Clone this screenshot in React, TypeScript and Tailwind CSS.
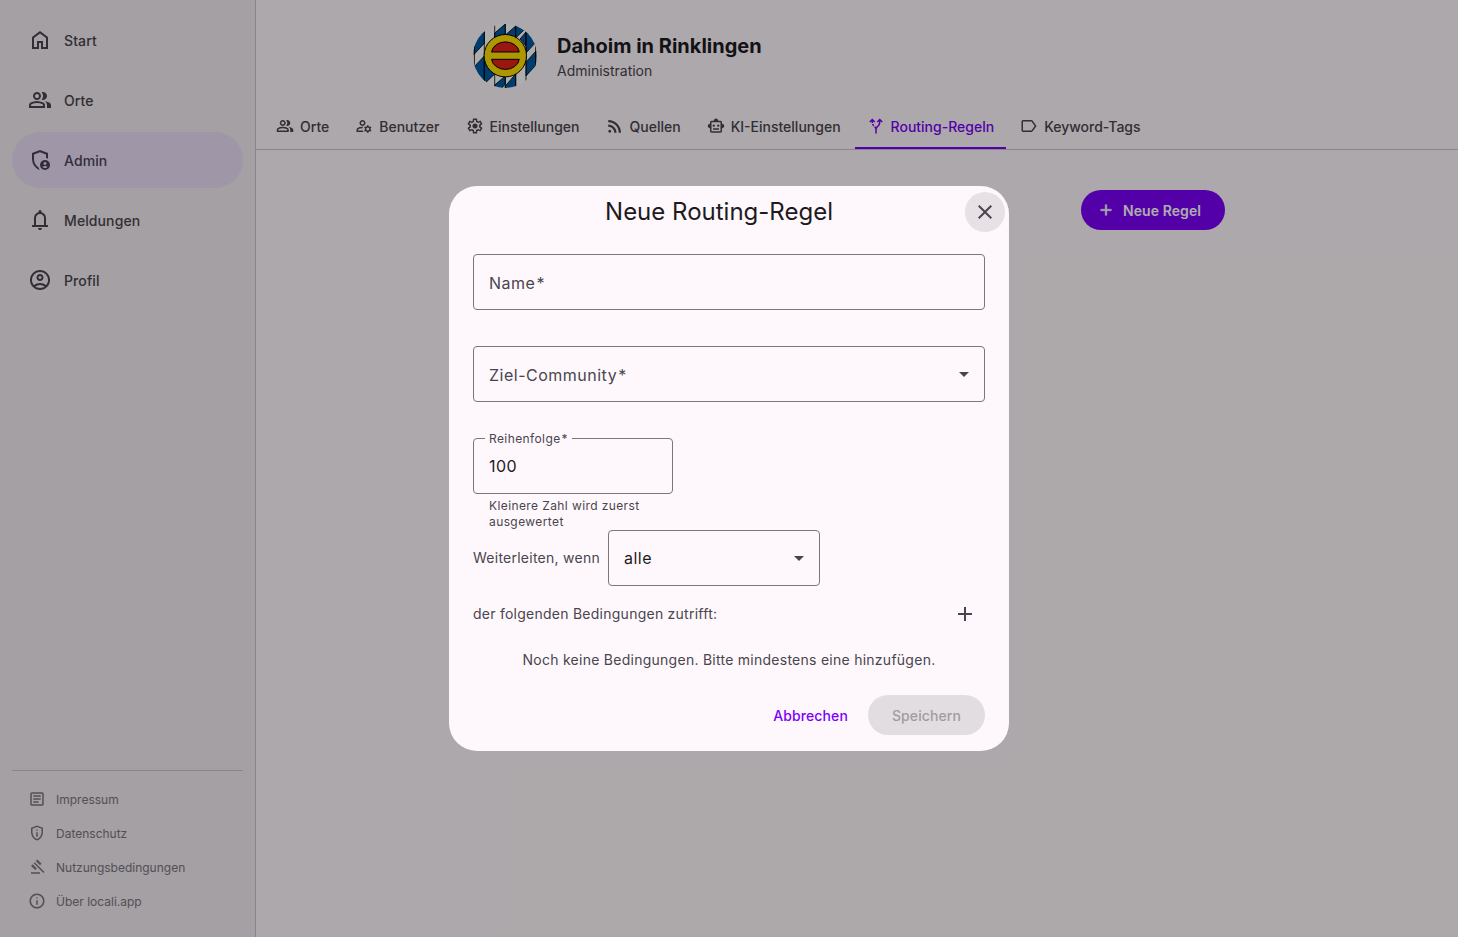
const PATHS = {
  home: 'M240-200h120v-240h240v240h120v-360L480-740 240-560v360Zm-80 80v-480l320-240 320 240v480H520v-240h-80v240H160Z',
  group:
    'M40-160v-112q0-34 17.5-62.5T104-378q62-31 126-46.5T360-440q66 0 130 15.5T616-378q29 15 46.5 43.5T680-272v112H40Zm720 0v-120q0-44-24.5-84.5T666-434q51 6 96 20.5t84 35.5q36 20 55 44.5t19 53.5v120H760ZM360-480q-66 0-113-47t-47-113q0-66 47-113t113-47q66 0 113 47t47 113q0 66-47 113t-113 47Zm400-160q0 66-47 113t-113 47q-11 0-28-2.5t-28-5.5q27-32 41.5-71t14.5-81q0-42-14.5-81T544-792q14-5 28-6.5t28-1.5q66 0 113 47t47 113ZM120-240h480v-32q0-11-5.5-20T580-306q-54-27-109-40.5T360-360q-56 0-111 13.5T140-306q-9 5-14.5 14t-5.5 20v32Zm240-320q33 0 56.5-23.5T440-640q0-33-23.5-56.5T360-720q-33 0-56.5 23.5T280-640q0 33 23.5 56.5T360-560Z',
  admin:
    'M680-280q25 0 42.5-17.5T740-340q0-25-17.5-42.5T680-400q-25 0-42.5 17.5T620-340q0 25 17.5 42.5T680-280Zm0 120q31 0 57-14.5t42-38.5q-22-13-47-20t-52-7q-27 0-52 7t-47 20q16 24 42 38.5t57 14.5ZM480-80q-139-35-229.5-159.5T160-516v-244l320-120 320 120v227q-19-8-39-14.5t-41-9.5v-147l-240-90-240 90v188q0 47 12.5 94t35 89.5Q310-290 342-254t71 60q11 32 29 61t41 52q-1 0-1.5.5t-1.5.5Zm200 0q-83 0-141.5-58.5T480-280q0-83 58.5-141.5T680-480q83 0 141.5 58.5T880-280q0 83-58.5 141.5T680-80Z',
  bell: 'M160-200v-80h80v-280q0-83 50-147.5T420-792v-28q0-25 17.5-42.5T480-880q25 0 42.5 17.5T540-820v28q80 20 130 84.5T720-560v280h80v80H160Zm320 120q-33 0-56.5-23.5T400-160h160q0 33-23.5 56.5T480-80ZM320-280h320v-280q0-66-47-113t-113-47q-66 0-113 47t-47 113v280Z',
  account:
    'M234-276q51-39 114-61.5T480-360q69 0 132 22.5T726-276q35-41 54.5-93T800-480q0-133-93.5-226.5T480-800q-133 0-226.5 93.5T160-480q0 59 19.5 111t54.5 93Zm246-164q-59 0-99.5-40.5T340-580q0-59 40.5-99.5T480-720q59 0 99.5 40.5T620-580q0 59-40.5 99.5T480-440Zm0 360q-83 0-156-31.5T197-197q-54-54-85.5-127T80-480q0-83 31.5-156T197-763q54-54 127-85.5T480-880q83 0 156 31.5T763-763q54 54 85.5 127T880-480q0 83-31.5 156T763-197q-54 54-127 85.5T480-80Zm0-80q53 0 100-15.5t86-44.5q-39-29-86-44.5T480-280q-53 0-100 15.5T294-220q39 29 86 44.5T480-160Zm0-360q26 0 43-17t17-43q0-26-17-43t-43-17q-26 0-43 17t-17 43q0 26 17 43t43 17Z',
  article:
    'M280-280h280v-80H280v80Zm0-160h400v-80H280v80Zm0-160h400v-80H280v80Zm-80 480q-33 0-56.5-23.5T120-200v-560q0-33 23.5-56.5T200-840h560q33 0 56.5 23.5T840-760v560q0 33-23.5 56.5T760-120H200Zm0-80h560v-560H200v560Z',
  privacy:
    'M440-280h80v-240h-80v240Zm40-320q17 0 28.5-11.5T520-640q0-17-11.5-28.5T480-680q-17 0-28.5 11.5T440-640q0 17 11.5 28.5T480-600Zm0 520q-139-35-229.5-159.5T160-516v-244l320-120 320 120v244q0 152-90.5 276.5T480-80Zm0-84q104-33 172-132t68-220v-189l-240-90-240 90v189q0 121 68 220t172 132Z',
  gavel:
    'M160-120v-80h480v80H160Zm226-194L160-540l84-86 228 226-86 86Zm254-254L414-796l86-84 226 226-86 86Zm184 408L302-682l56-56 522 522-56 56Z',
  info: 'M440-280h80v-240h-80v240Zm40-320q17 0 28.5-11.5T520-640q0-17-11.5-28.5T480-680q-17 0-28.5 11.5T440-640q0 17 11.5 28.5T480-600Zm0 520q-83 0-156-31.5T197-197q-54-54-85.5-127T80-480q0-83 31.5-156T197-763q54-54 127-85.5T480-880q83 0 156 31.5T763-763q54 54 85.5 127T880-480q0 83-31.5 156T763-197q-54 54-127 85.5T480-80Zm0-80q134 0 227-93t93-227q0-134-93-227t-227-93q-134 0-227 93t-93 227q0 134 93 227t227 93Z',
  manage:
    'M400-480q-66 0-113-47t-47-113q0-66 47-113t113-47q66 0 113 47t47 113q0 66-47 113t-113 47ZM80-160v-112q0-33 17-62t47-44q51-26 115-44t141-18h14q6 0 12 2-8 18-13.5 37.5T404-360h-4q-71 0-127.5 18T180-306q-9 5-14.5 14t-5.5 20v32h252q6 21 16 41.5t22 38.5H80Zm560 40-12-60q-12-5-22.5-10.5T584-204l-58 18-40-68 46-40q-2-14-2-26t2-26l-46-40 40-68 58 18q11-8 21.5-13.5T628-460l12-60h80l12 60q12 5 22.5 11t21.5 15l58-20 40 70-46 40q2 12 2 25t-2 25l46 40-40 68-58-18q-11 8-21.5 13.5T732-180l-12 60h-80Zm40-120q33 0 56.5-23.5T760-320q0-33-23.5-56.5T680-400q-33 0-56.5 23.5T600-320q0 33 23.5 56.5T680-240ZM400-560q33 0 56.5-23.5T480-640q0-33-23.5-56.5T400-720q-33 0-56.5 23.5T320-640q0 33 23.5 56.5T400-560Z',
  settings:
    'm370-80-16-128q-13-5-24.5-12T307-235l-119 50L78-375l103-78q-1-7-1-13.5v-27q0-6.5 1-13.5L78-585l110-190 119 50q11-8 23-15t24-12l16-128h220l16 128q13 5 24.5 12t22.5 15l119-50 110 190-103 78q1 7 1 13.5v27q0 6.5-2 13.5l103 78-110 190-118-50q-11 8-23 15t-24 12L590-80H370Zm70-80h79l14-106q31-8 57.5-23.5T639-327l99 41 39-68-86-65q5-14 7-29.5t2-31.5q0-16-2-31.5t-7-29.5l86-65-39-68-99 42q-22-23-48.5-38.5T533-694l-13-106h-79l-14 106q-31 8-57.5 23.5T321-633l-99-41-39 68 86 64q-5 15-7 30t-2 32q0 16 2 31t7 30l-86 65 39 68 99-42q22 23 48.5 38.5T427-266l13 106Zm42-180q58 0 99-41t41-99q0-58-41-99t-99-41q-59 0-99.5 41T342-480q0 58 40.5 99t99.5 41Z',
  rss: 'M200-120q-33 0-56.5-23.5T120-200q0-33 23.5-56.5T200-280q33 0 56.5 23.5T280-200q0 33-23.5 56.5T200-120Zm480 0q0-117-44-218.5T516-516q-76-76-177.5-120T120-680v-120q142 0 265 53t216 146q93 93 146 216t53 265H680Zm-240 0q0-67-25-124.5T346-346q-44-44-101.5-69T120-440v-120q92 0 171.5 34.5T431-431q60 60 94.5 139.5T560-120H440Z',
  robot:
    'M160-360q-50 0-85-35t-35-85q0-50 35-85t85-35v-80q0-33 23.5-56.5T240-760h120q0-50 35-85t85-35q50 0 85 35t35 85h120q33 0 56.5 23.5T800-680v80q50 0 85 35t35 85q0 50-35 85t-85 35v160q0 33-23.5 56.5T720-120H240q-33 0-56.5-23.5T160-200v-160Zm200-80q25 0 42.5-17.5T420-500q0-25-17.5-42.5T360-560q-25 0-42.5 17.5T300-500q0 25 17.5 42.5T360-440Zm240 0q25 0 42.5-17.5T660-500q0-25-17.5-42.5T600-560q-25 0-42.5 17.5T540-500q0 25 17.5 42.5T600-440ZM320-280h320v-80H320v80Zm-80 80h480v-480H240v480Z',
  route:
    'M440-80v-200q0-56-17-83t-45-53l57-57q12 11 23 23.5t22 26.5q14-19 28.5-33.5T538-485q38-35 69-81t33-161l-63 63-57-56 160-160 160 160-56 56-64-63q-2 143-44 203.5T592-425q-32 29-52 56.5T520-280v200h-80ZM248-633q-4-20-5.5-44t-2.5-50l-64 63-56-56 160-160 160 160-57 56-63-62q0 21 2 39.5t4 34.5l-78 19Zm86 176q-20-21-38.5-49T263-575l77-19q10 27 23 46t28 34l-57 57Z',
  label:
    'M880-480 687-208q-16 22-41 35t-52 13H160q-33 0-56.5-23.5T80-240v-480q0-33 23.5-56.5T160-800h434q27 0 52 13t41 35l193 272Zm-98 0L622-706q-5-7-12.5-10.5T594-720H160v480h434q8 0 15.5-3.5T622-254l160-226Z',
  close:
    'm256-200-56-56 224-224-224-224 56-56 224 224 224-224 56 56-224 224 224 224-56 56-224-224-224 224Z',
  add: 'M440-440H200v-80h240v-240h80v240h240v80H520v240h-80v-240Z',
};

type IconName = keyof typeof PATHS;

function Icon({ name, className = 'w-6 h-6' }: { name: IconName; className?: string }) {
  return (
    <svg viewBox="0 -960 960 960" fill="currentColor" className={`shrink-0 ${className}`}>
      <path d={PATHS[name]} />
    </svg>
  );
}

function Crest() {
  return (
    <svg viewBox="0 0 64 64" className="w-16 h-16 rounded-full shrink-0">
      <rect x="1" width="62" height="64" fill="#ffffff" />
      <g fill="#005aa4" stroke="#000000" strokeWidth="0.8">
        <path d="M1 0H11.3V19.3L1 30.5Z" />
        <path d="M1 43 11.3 32V60H1Z" />
        <path d="M11.3 38H21.7V50L11.3 60Z" />
        <path d="M21.7 9 32.3 0V14H21.7Z" />
        <path d="M21.7 61 32.3 52V60L28 65H21.7Z" />
        <path d="M32.3 11 42.7 2V14H32.3Z" />
        <path d="M32.3 62 42.7 50V65H32.3Z" />
        <path d="M42.7 0H53V4L42.7 14Z" />
        <path d="M47 15 53 8V22Z" />
        <path d="M53 4H63V18L53 29Z" />
        <path d="M53 38 63 27V41L53 52Z" />
      </g>
      <path d="M11.3 0V64M21.7 0V64M32.3 0V64M42.7 0V64M53 0V64M1.4 0V64M62.6 0V64" stroke="#000000" strokeWidth="0.8" />
      <circle cx="32.3" cy="31.7" r="21.2" fill="#ffdf00" stroke="#000000" strokeWidth="1" />
      <path d="M18.5 28A14 11.5 0 0 1 46.3 28Z" fill="#e22219" stroke="#000000" strokeWidth="1" />
      <path d="M18.5 35.3A14 11.5 0 0 0 46.3 35.3Z" fill="#e22219" stroke="#000000" strokeWidth="1" />
    </svg>
  );
}

const navItems: { icon: IconName; label: string; active?: boolean }[] = [
  { icon: 'home', label: 'Start' },
  { icon: 'group', label: 'Orte' },
  { icon: 'admin', label: 'Admin', active: true },
  { icon: 'bell', label: 'Meldungen' },
  { icon: 'account', label: 'Profil' },
];

const footerItems: { icon: IconName; label: string }[] = [
  { icon: 'article', label: 'Impressum' },
  { icon: 'privacy', label: 'Datenschutz' },
  { icon: 'gavel', label: 'Nutzungsbedingungen' },
  { icon: 'info', label: 'Über locali.app' },
];

const tabs: { icon: IconName; label: string; active?: boolean }[] = [
  { icon: 'group', label: 'Orte' },
  { icon: 'manage', label: 'Benutzer' },
  { icon: 'settings', label: 'Einstellungen' },
  { icon: 'rss', label: 'Quellen' },
  { icon: 'robot', label: 'KI-Einstellungen' },
  { icon: 'route', label: 'Routing-Regeln', active: true },
  { icon: 'label', label: 'Keyword-Tags' },
];

function Sidebar() {
  return (
    <aside className="w-64 shrink-0 flex flex-col justify-between bg-[#f2ecf0] border-r border-[#cbc4cf] px-3 pt-3 pb-[18px]">
      <nav className="flex flex-col gap-1">
        {navItems.map((item) => (
          <a
            key={item.label}
            className={`flex items-center gap-3 h-14 px-4 rounded-full text-sm font-medium tracking-[0.1px] ${
              item.active ? 'bg-[#eadef7] text-[#4b4357]' : 'text-[#49454e]'
            }`}
          >
            <Icon name={item.icon} />
            <span className="pt-0.5">{item.label}</span>
          </a>
        ))}
      </nav>
      <div className="border-t border-[#cbc4cf] pt-[11px] pb-px flex flex-col">
        {footerItems.map((item) => (
          <a key={item.label} className="flex items-center gap-2.5 h-[34px] px-4 text-xs text-[#7b757f]">
            <Icon name={item.icon} className="w-[18px] h-[18px]" />
            <span className="pt-0.5">{item.label}</span>
          </a>
        ))}
      </div>
    </aside>
  );
}

function Arrow() {
  return (
    <svg viewBox="0 0 10 5" className="w-2.5 h-[5px] shrink-0" fill="#49454e">
      <path d="M0 0H10L5 5Z" />
    </svg>
  );
}

function Required({ label }: { label: string }) {
  return (
    <>
      {label}
      <span className="ml-px">*</span>
    </>
  );
}

function RuleDialog() {
  return (
    <div className="w-[560px] h-[565px] bg-[#fef8fc] rounded-[28px] pt-1.5 flex flex-col text-[#49454e]">
      <div className="flex items-center pl-6 pr-1">
        <h2 className="flex-1 text-center text-2xl leading-8 text-[#1d1b1e]">Neue Routing-Regel</h2>
        <button className="w-10 h-10 rounded-full bg-[#e7e1e5] flex items-center justify-center">
          <Icon name="close" />
        </button>
      </div>

      <div className="px-6 pt-[22px] flex flex-col">
        <div className="h-14 border border-[#7b757f] rounded px-[15px] pt-0.5 flex items-center tracking-[0.5px]">
          <Required label="Name" />
        </div>
        <div className="mt-9 h-14 border border-[#7b757f] rounded px-[15px] flex items-center justify-between tracking-[0.5px]">
          <span className="pt-0.5">
            <Required label="Ziel-Community" />
          </span>
          <Arrow />
        </div>

        <div className="mt-9 w-[200px]">
          <div className="relative h-14 border border-[#7b757f] rounded px-[15px] flex items-center tracking-[0.5px] text-[#1d1b1e]">
            <span className="absolute -top-2 left-[11px] px-1 bg-[#fef8fc] text-xs tracking-[0.4px] text-[#49454e]">
              <Required label="Reihenfolge" />
            </span>
            100
          </div>
          <p className="h-9 pt-1 pl-4 pr-4 text-xs leading-4 tracking-[0.4px]">Kleinere Zahl wird zuerst ausgewertet</p>
        </div>

        <div className="flex items-center gap-2 text-sm tracking-[0.25px]">
          <span>Weiterleiten, wenn</span>
          <div className="w-[212px] h-14 border border-[#7b757f] rounded px-[15px] flex items-center justify-between text-base tracking-[0.5px] text-[#1d1b1e]">
            <span>alle</span>
            <Arrow />
          </div>
        </div>

        <div className="mt-2 h-10 flex items-center justify-between text-sm tracking-[0.25px]">
          <span>der folgenden Bedingungen zutrifft:</span>
          <button className="w-10 h-10 flex items-center justify-center">
            <Icon name="add" />
          </button>
        </div>

        <p className="mt-4 text-center text-sm tracking-[0.26px]">Noch keine Bedingungen. Bitte mindestens eine hinzufügen.</p>
      </div>

      <div className="mt-auto px-6 pb-4 flex items-center justify-end gap-2 text-sm font-medium tracking-[0.1px]">
        <button className="h-10 px-3 pt-0.5 text-[#7d00fa]">Abbrechen</button>
        <button className="h-10 px-6 pt-0.5 rounded-full bg-[#e2dde1] text-[#a19ca1]">Speichern</button>
      </div>
    </div>
  );
}

export default function App() {
  return (
    <div className="relative w-[1458px] h-[937px] overflow-hidden flex bg-[#fef8fc] font-['Inter',sans-serif] text-[#1d1b1e]">
      <Sidebar />

      <main className="flex-1 flex flex-col">
        <header className="border-b border-[#cbc4cf]">
          <div className="pl-[217px] pt-6 flex items-center gap-5">
            <Crest />
            <div>
              <h1 className="text-xl leading-7 font-bold">Dahoim in Rinklingen</h1>
              <p className="text-sm leading-5 mt-px text-[#49454e]">Administration</p>
            </div>
          </div>
          <div className="pl-2 mt-[17px] flex gap-0.5">
            {tabs.map((tab) => (
              <a
                key={tab.label}
                className={`h-11 px-3 flex items-center gap-1.5 border-b-2 text-sm font-medium ${
                  tab.active ? 'border-[#7d00fa] text-[#7d00fa]' : 'border-transparent text-[#49454e]'
                }`}
              >
                <Icon name={tab.icon} className="w-[18px] h-[18px]" />
                <span className="pt-0.5">{tab.label}</span>
              </a>
            ))}
          </div>
        </header>

        <div className="pt-10 pr-[233px] flex justify-end">
          <button className="h-10 pl-4 pr-6 flex items-center gap-2 rounded-full bg-[#7d00fa] text-white text-sm font-semibold tracking-[0.08px]">
            <Icon name="add" className="w-[18px] h-[18px] stroke-current stroke-[30]" />
            <span className="pt-0.5">Neue Regel</span>
          </button>
        </div>
      </main>

      <div className="absolute inset-0 bg-black/32 flex items-center justify-center">
        <RuleDialog />
      </div>
    </div>
  );
}
